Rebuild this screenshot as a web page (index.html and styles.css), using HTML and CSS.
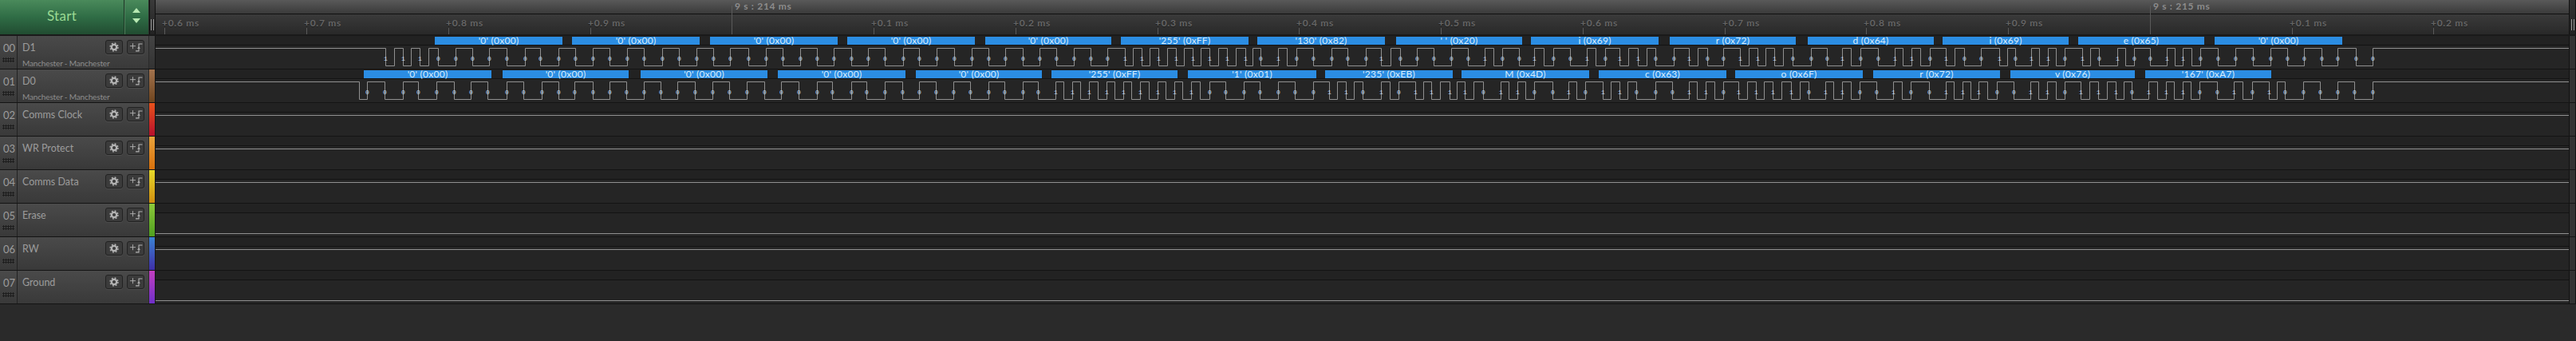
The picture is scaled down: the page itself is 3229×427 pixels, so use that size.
FILE: index.html
```html
<!DOCTYPE html>
<html lang="en">

<head>
  <meta charset="UTF-8">
  <title>Logic</title>
  <link rel="stylesheet" href="styles.css">
</head>

<body>
  <svg class="defs" width="0" height="0">
    <symbol id="gear" viewBox="0 0 22 18">
      <circle cx="11" cy="9" r="3.6" fill="none" stroke="#b4b4b4" stroke-width="2.6" />
      <circle cx="11" cy="9" r="5.6" fill="none" stroke="#b4b4b4" stroke-width="1.6" stroke-dasharray="2.2 2.2" />
    </symbol>
    <symbol id="trig" viewBox="0 0 22 18">
      <path d="M3 7.5h8M7 3.5v8" fill="none" stroke="#b4b4b4" stroke-width="1" />
      <path d="M11 14.5h4.5v-10h5" fill="none" stroke="#b4b4b4" stroke-width="1.2" />
      <path d="M13.2 11l2.3-2.6 2.3 2.6z" fill="#b4b4b4" />
    </symbol>
  </svg>

  <div class="app">
    <div class="head">
      <div class="start">
        <div class="start-label">Start</div>
        <div class="start-arrows">
          <span class="arrow-up"></span>
          <span class="arrow-down"></span>
        </div>
      </div>
      <div class="head-grip"><span></span></div>
      <div class="timeline">
        <div class="overview" id="overview"></div>
        <div class="ticks" id="ticks"></div>
      </div>
      <div class="head-end"><span></span></div>
    </div>

    <div class="row">
      <div class="side">
        <div class="id">00<i class="dots"></i></div>
        <div class="names">
          <div class="name">D1</div>
          <div class="sub">Manchester - Manchester</div>
        </div>
        <div class="btns">
          <a class="btn"><svg><use href="#gear" /></svg></a>
          <a class="btn"><svg><use href="#trig" /></svg></a>
        </div>
      </div>
      <div class="bar c0"></div>
      <div class="trace" data-ch="d1"></div>
      <div class="scroll"></div>
    </div>

    <div class="row">
      <div class="side">
        <div class="id">01<i class="dots"></i></div>
        <div class="names">
          <div class="name">D0</div>
          <div class="sub">Manchester - Manchester</div>
        </div>
        <div class="btns">
          <a class="btn"><svg><use href="#gear" /></svg></a>
          <a class="btn"><svg><use href="#trig" /></svg></a>
        </div>
      </div>
      <div class="bar c1"></div>
      <div class="trace" data-ch="d0"></div>
      <div class="scroll"></div>
    </div>

    <div class="row">
      <div class="side">
        <div class="id">02<i class="dots"></i></div>
        <div class="names">
          <div class="name">Comms Clock</div>
        </div>
        <div class="btns">
          <a class="btn"><svg><use href="#gear" /></svg></a>
          <a class="btn"><svg><use href="#trig" /></svg></a>
        </div>
      </div>
      <div class="bar c2"></div>
      <div class="trace" data-ch="high"></div>
      <div class="scroll"></div>
    </div>

    <div class="row">
      <div class="side">
        <div class="id">03<i class="dots"></i></div>
        <div class="names">
          <div class="name">WR Protect</div>
        </div>
        <div class="btns">
          <a class="btn"><svg><use href="#gear" /></svg></a>
          <a class="btn"><svg><use href="#trig" /></svg></a>
        </div>
      </div>
      <div class="bar c3"></div>
      <div class="trace" data-ch="high"></div>
      <div class="scroll"></div>
    </div>

    <div class="row">
      <div class="side">
        <div class="id">04<i class="dots"></i></div>
        <div class="names">
          <div class="name">Comms Data</div>
        </div>
        <div class="btns">
          <a class="btn"><svg><use href="#gear" /></svg></a>
          <a class="btn"><svg><use href="#trig" /></svg></a>
        </div>
      </div>
      <div class="bar c4"></div>
      <div class="trace" data-ch="high"></div>
      <div class="scroll"></div>
    </div>

    <div class="row">
      <div class="side">
        <div class="id">05<i class="dots"></i></div>
        <div class="names">
          <div class="name">Erase</div>
        </div>
        <div class="btns">
          <a class="btn"><svg><use href="#gear" /></svg></a>
          <a class="btn"><svg><use href="#trig" /></svg></a>
        </div>
      </div>
      <div class="bar c5"></div>
      <div class="trace" data-ch="low"></div>
      <div class="scroll"></div>
    </div>

    <div class="row">
      <div class="side">
        <div class="id">06<i class="dots"></i></div>
        <div class="names">
          <div class="name">RW</div>
        </div>
        <div class="btns">
          <a class="btn"><svg><use href="#gear" /></svg></a>
          <a class="btn"><svg><use href="#trig" /></svg></a>
        </div>
      </div>
      <div class="bar c6"></div>
      <div class="trace" data-ch="high"></div>
      <div class="scroll"></div>
    </div>

    <div class="row">
      <div class="side">
        <div class="id">07<i class="dots"></i></div>
        <div class="names">
          <div class="name">Ground</div>
        </div>
        <div class="btns">
          <a class="btn"><svg><use href="#gear" /></svg></a>
          <a class="btn"><svg><use href="#trig" /></svg></a>
        </div>
      </div>
      <div class="bar c7"></div>
      <div class="trace" data-ch="low"></div>
      <div class="scroll"></div>
    </div>
  </div>

  <script src="script.js"></script>
</body>

</html>
```

FILE: styles.css
```css
* {
  box-sizing: border-box;
}

body {
  margin: 0;
  background-color: #2a2a2a;
  font-family: "Lato", "Liberation Sans", sans-serif;
  overflow: hidden;
}

.defs {
  position: absolute;
}

.app {
  width: 3229px;
  height: 427px;
}

.head {
  display: flex;
  height: 45px;
  border-bottom: 2px solid #1a1a1a;
}

.start {
  display: flex;
  width: 186px;
  background: linear-gradient(#4a8a5b, #2f6c45 50%, #214c31);
}

.start-label {
  width: 156px;
  text-align: center;
  font-size: 17px;
  line-height: 40px;
  letter-spacing: 0.3px;
  color: #9ad992;
  border-right: 1px solid #1c3a26;
  box-shadow: 1px 0 0 #4f7f5c;
}

.start-arrows {
  flex: 1;
  display: flex;
  flex-direction: column;
  align-items: center;
  gap: 7px;
  padding-top: 10px;
}

.arrow-up {
  width: 0;
  height: 0;
  border-left: 5px solid transparent;
  border-right: 5px solid transparent;
  border-bottom: 6px solid #b7e8b2;
}

.arrow-down {
  width: 0;
  height: 0;
  border-left: 5px solid transparent;
  border-right: 5px solid transparent;
  border-top: 6px solid #b7e8b2;
}

.head-grip {
  width: 8px;
  margin-left: 1px;
  background: linear-gradient(#3a3a3a, #222);
  border-left: 1px solid #111;
  border-right: 1px solid #111;
  display: flex;
  justify-content: center;
  padding-top: 24px;
}

.head-grip span,
.head-end span {
  display: block;
  width: 4px;
  height: 14px;
  border-left: 1px solid #9a9a9a;
  border-right: 1px solid #9a9a9a;
}

.timeline {
  flex: 1;
  position: relative;
}

.overview {
  height: 18px;
  background: linear-gradient(#595959, #3a3a3a);
  border-bottom: 1px solid #111;
}

.ticks {
  height: 25px;
  background: linear-gradient(#3a3a3a, #292929);
}

.tick {
  position: absolute;
  bottom: 0;
  height: 8px;
  width: 1px;
  background-color: #5a5a5a;
}

.tick-label {
  position: absolute;
  top: 21px;
  font-size: 12px;
  font-weight: 700;
  letter-spacing: 0.72px;
  white-space: nowrap;
  color: #666;
  text-shadow: 0 1px 0 #1e1e1e;
}

.major {
  position: absolute;
  top: 7px;
  bottom: 0;
  width: 1px;
  background-color: #5a5a5a;
}

.major-label {
  position: absolute;
  top: 0;
  font-size: 12px;
  font-weight: 700;
  letter-spacing: 0.7px;
  white-space: nowrap;
  color: #8c8c8c;
}

.head-end {
  width: 9px;
  background: linear-gradient(#333, #222);
  border-left: 1px solid #111;
  border-right: 1px solid #111;
  padding: 24px 0 0 2px;
}

.row {
  display: flex;
  height: 42px;
  border-bottom: 1px solid #141414;
}

.side {
  display: flex;
  width: 186px;
  background: linear-gradient(#4a4a4a, #393939);
}

.id {
  width: 22px;
  border-right: 1px solid #222;
  padding: 8px 0 0 4px;
  font-size: 13px;
  line-height: 14px;
  color: #9c9c9c;
}

.dots {
  display: block;
  width: 15px;
  height: 6px;
  margin: 5px 0 0 -1px;
  background-image: radial-gradient(#1e1e1e 1px, transparent 1.2px);
  background-size: 3px 3px;
}

.names {
  width: 110px;
  padding: 7px 0 0 6px;
  white-space: nowrap;
}

.name {
  font-size: 12.5px;
  line-height: 16px;
  color: #9c9c9c;
}

.sub {
  margin-top: 5px;
  font-size: 10px;
  line-height: 12px;
  letter-spacing: -0.15px;
  color: #8e8e8e;
}

.btns {
  display: flex;
  gap: 5px;
  padding: 5px 5px 0 0;
}

.btn {
  width: 22px;
  height: 18px;
  border: 1px solid #222;
  border-radius: 3px;
  background-color: #3b3b3b;
  box-shadow: 0 1px 0 #4c4c4c;
}

.btn svg {
  display: block;
  width: 20px;
  height: 16px;
}

.bar {
  width: 8px;
  margin-left: 1px;
  border-right: 1px solid #151515;
}

.c0 { background: linear-gradient(#444, #333); }
.c1 { background: linear-gradient(#a3734d, #6f451f); }
.c2 { background: linear-gradient(#e9521b, #b6102d); }
.c3 { background: linear-gradient(#e8a43c, #d8700c); }
.c4 { background: linear-gradient(#e6d92a, #d08e10); }
.c5 { background: linear-gradient(#8dc93a, #4f9f20); }
.c6 { background: linear-gradient(#3b82d2, #3f2fa8); }
.c7 { background: linear-gradient(#c33fc0, #6f30c8); }

.trace {
  flex: 1;
  display: flex;
  flex-direction: column;
  min-width: 0;
}

.lane {
  position: relative;
  height: 12px;
  background-color: #222;
  border-bottom: 1px solid #131313;
}

.bubble {
  position: absolute;
  top: 1px;
  height: 10px;
  background-color: #2b8de3;
  color: #d9ecfb;
  font-size: 12px;
  line-height: 10px;
  letter-spacing: 0.25px;
  text-align: center;
  white-space: pre;
}

.wave {
  display: block;
  flex: 1;
  width: 100%;
  background-color: #252525;
}

.wave path {
  fill: none;
  stroke: #909090;
  stroke-width: 1;
}

.wave text {
  font-family: "Liberation Mono", monospace;
  font-size: 8px;
  fill: #c2dff7;
  text-anchor: middle;
}

.scroll {
  width: 9px;
  background-color: #333;
  border-left: 1px solid #111;
  border-right: 1px solid #111;
}
```

FILE: script.js
```js
// left edge of the trace column, all x below are page pixels
const ORIGIN = 195;

// bit:x for every decoded bit mark, read off the capture
const channels = {
  d1: {
    first: null,
    bits: "1:483 1:505 1:526 0:549 0:571 0:592 0:613 0:635 0:658 0:677 0:700 0:721 0:743 0:764 0:786 0:807 0:830 0:851 0:873 0:894 0:915 0:938 0:960 0:981 0:1003 0:1024 0:1045 0:1067 0:1088 0:1109 0:1132 0:1152 0:1174 0:1196 0:1218 0:1239 0:1260 0:1282 0:1303 0:1324 0:1346 0:1367 0:1388 1:1410 1:1431 1:1452 1:1474 1:1495 1:1516 1:1538 1:1561 0:1580 1:1602 0:1625 0:1646 0:1669 0:1689 0:1712 1:1731 0:1755 0:1776 0:1797 0:1819 0:1840 1:1861 0:1883 0:1904 1:1923 0:1947 0:1968 1:1989 0:2012 1:2030 1:2053 0:2075 0:2098 1:2117 0:2140 0:2160 1:2181 1:2203 1:2224 0:2247 0:2270 0:2290 1:2309 0:2332 0:2354 1:2375 1:2396 0:2419 1:2439 0:2462 0:2483 1:2506 0:2526 1:2546 1:2567 0:2588 1:2610 0:2631 1:2654 0:2675 0:2695 1:2716 1:2736 0:2758 0:2780 0:2802 0:2824 0:2846 0:2867 0:2888 0:2910 0:2930 0:2953 0:2974",
    frames: [
      [545, 705, "'0' (0x00)"], [717, 877, "'0' (0x00)"], [890, 1050, "'0' (0x00)"],
      [1062, 1222, "'0' (0x00)"], [1235, 1393, "'0' (0x00)"], [1405, 1565, "'255' (0xFF)"],
      [1576, 1736, "'130' (0x82)"], [1750, 1908, "' ' (0x20)"], [1919, 2079, "i (0x69)"],
      [2093, 2251, "r (0x72)"], [2266, 2424, "d (0x64)"], [2435, 2593, "i (0x69)"],
      [2605, 2763, "e (0x65)"], [2776, 2936, "'0' (0x00)"]
    ]
  },
  d0: {
    first: 450,
    bits: "0:460 0:482 0:505 0:524 0:547 0:569 0:590 0:611 0:635 0:656 0:679 0:700 0:720 0:743 0:764 0:785 0:807 0:828 0:849 0:871 0:893 0:914 0:936 0:958 0:979 0:1001 0:1024 0:1043 0:1067 0:1086 0:1109 0:1131 0:1152 0:1173 0:1195 0:1216 0:1239 0:1259 0:1282 0:1301 1:1323 1:1344 1:1365 1:1387 1:1408 1:1429 1:1451 1:1472 1:1493 0:1516 0:1536 0:1559 0:1579 0:1602 0:1623 0:1646 1:1666 1:1687 0:1708 1:1731 0:1753 1:1774 1:1794 1:1817 1:1836 0:1859 1:1881 1:1902 0:1923 0:1946 1:1966 0:1987 1:2009 1:2030 0:2051 0:2075 0:2096 1:2117 1:2138 0:2160 1:2179 1:2201 1:2222 1:2245 0:2267 1:2288 1:2309 0:2331 0:2352 1:2373 0:2395 0:2418 1:2439 1:2460 1:2480 0:2503 0:2524 1:2545 1:2566 0:2588 1:2608 1:2630 1:2652 0:2672 1:2693 1:2715 1:2736 0:2757 0:2779 1:2800 0:2823 1:2844 0:2864 0:2887 0:2908 0:2930 0:2951 0:2974",
    frames: [
      [456, 616, "'0' (0x00)"], [630, 788, "'0' (0x00)"], [803, 962, "'0' (0x00)"],
      [975, 1135, "'0' (0x00)"], [1148, 1306, "'0' (0x00)"], [1318, 1476, "'255' (0xFF)"],
      [1489, 1650, "'1' (0x01)"], [1661, 1821, "'235' (0xEB)"], [1832, 1992, "M (0x4D)"],
      [2004, 2164, "c (0x63)"], [2175, 2335, "o (0x6F)"], [2348, 2507, "r (0x72)"],
      [2520, 2676, "v (0x76)"], [2689, 2847, "'167' (0xA7)"]
    ]
  }
};

const HIGH = 3.5;
const LOW = 25.5;
const WIDTH = 3220 - ORIGIN;

function buildPath(marks, first) {
  let level = HIGH;
  let d = "M0 " + level;
  const edge = x => {
    const px = Math.floor(x - ORIGIN) + 0.5;
    level = level === HIGH ? LOW : HIGH;
    d += " H" + px + " V" + level;
  };
  if (first) edge(first);
  marks.forEach((m, i) => {
    edge(m.x);
    if (m.bit === "1" && marks[i + 1]) edge((m.x + marks[i + 1].x) / 2);
  });
  return d + " H" + WIDTH;
}

function drawTrace(el) {
  const lane = document.createElement("div");
  lane.className = "lane";
  el.appendChild(lane);

  const ns = "http://www.w3.org/2000/svg";
  const svg = document.createElementNS(ns, "svg");
  svg.setAttribute("class", "wave");
  const path = document.createElementNS(ns, "path");
  svg.appendChild(path);
  el.appendChild(svg);

  const name = el.dataset.ch;
  if (name === "high" || name === "low") {
    const y = name === "high" ? HIGH : LOW;
    path.setAttribute("d", "M0 " + y + " H" + WIDTH);
    return;
  }

  const ch = channels[name];
  const marks = ch.bits.split(" ").map(s => {
    const p = s.split(":");
    return { bit: p[0], x: +p[1] };
  });
  path.setAttribute("d", buildPath(marks, ch.first));

  marks.forEach(m => {
    const t = document.createElementNS(ns, "text");
    t.setAttribute("x", m.x - ORIGIN + 0.5);
    t.setAttribute("y", 18.5);
    t.textContent = m.bit;
    svg.appendChild(t);
  });

  ch.frames.forEach(f => {
    const b = document.createElement("div");
    b.className = "bubble";
    b.style.left = (f[0] - ORIGIN) + "px";
    b.style.width = (f[1] - f[0]) + "px";
    b.textContent = f[2];
    lane.appendChild(b);
  });
}

function drawRuler() {
  const ticks = document.getElementById("ticks");
  const timeline = ticks.parentNode;
  const labels = ["0.6", "0.7", "0.8", "0.9", null, "0.1", "0.2", "0.3", "0.4", "0.5", "0.6", "0.7", "0.8", "0.9", null, "0.1", "0.2"];
  const majors = ["9 s : 214 ms", "9 s : 215 ms"];
  labels.forEach((label, i) => {
    const x = Math.round(206.4 + 177.75 * i) - 195;
    const line = document.createElement("div");
    const text = document.createElement("div");
    line.style.left = x + "px";
    text.style.left = (x + (label ? -3 : 4)) + "px";
    if (label) {
      line.className = "tick";
      text.className = "tick-label";
      text.textContent = "+" + label + " ms";
    } else {
      line.className = "major";
      text.className = "major-label";
      text.textContent = majors.shift();
    }
    timeline.appendChild(line);
    timeline.appendChild(text);
  });
}

document.querySelectorAll(".trace").forEach(drawTrace);
drawRuler();
```
